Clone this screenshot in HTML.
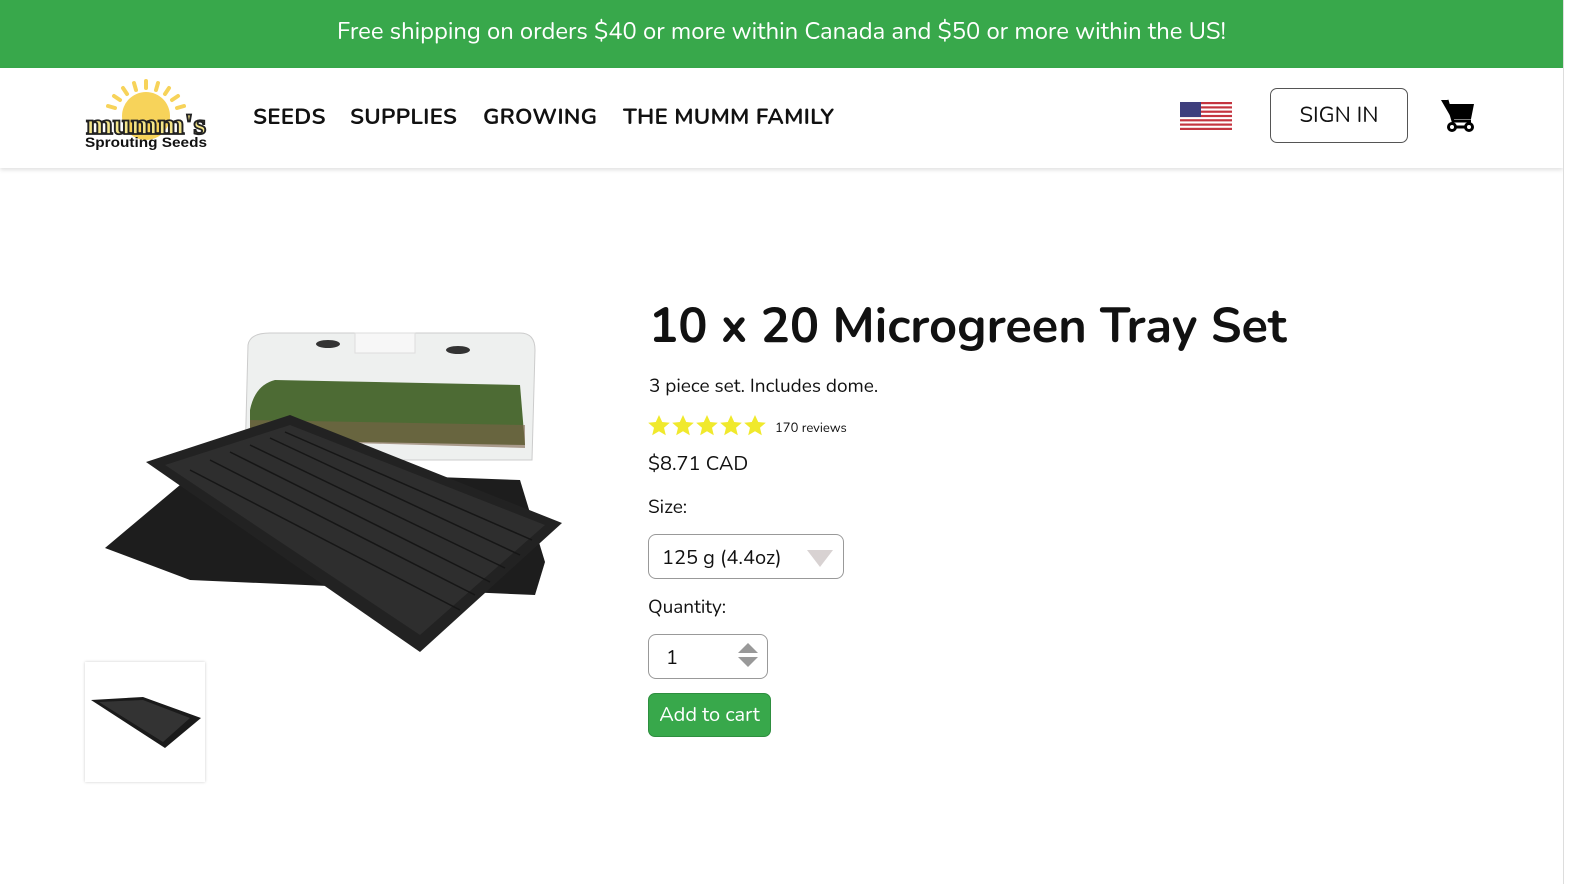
<!DOCTYPE html>
<html><head><meta charset="utf-8"><style>
*{margin:0;padding:0;box-sizing:border-box}
body{width:1572px;height:884px;background:#fff;font-family:"Nunito","Liberation Sans",sans-serif;color:#111;position:relative;overflow:hidden}
.banner{position:absolute;left:0;top:0;width:1563px;height:68px;background:#38a84b;color:#fff;font-size:23.8px;text-align:center;line-height:64px}
.rline{position:absolute;left:1563px;top:0;width:9px;height:884px;background:#fff;border-left:1px solid #ddd}
.header{position:absolute;left:0;top:68px;width:1563px;height:100px;background:#fff;box-shadow:0 2px 4px rgba(0,0,0,.12)}
.nav{position:absolute;top:101px;font-size:22.3px;font-weight:bold;color:#111;letter-spacing:.2px}
.signin{position:absolute;left:1270px;top:88px;width:138px;height:55px;border:1.5px solid #555;border-radius:7px;font-size:22px;text-align:center;line-height:52px}
.abs{position:absolute}
h1{position:absolute;left:649px;top:294px;font-size:48.8px;font-weight:bold;white-space:nowrap}
.t{position:absolute;font-size:19px;white-space:nowrap}
.box{position:absolute;border:1px solid #999;border-radius:8px;background:#fff}
.btn{position:absolute;left:648px;top:693px;width:123px;height:44px;background:#38a84b;border-radius:7px;color:#fff;font-size:20px;text-align:center;line-height:44px;border:1px solid #2e8e3f}
.thumb{position:absolute;left:85px;top:662px;width:120px;height:120px;box-shadow:0 0 3px rgba(0,0,0,.2)}
</style></head><body>
<div class="banner">Free shipping on orders $40 or more within Canada and $50 or more within the US!</div>
<div class="header"></div>
<div class="rline"></div>
<svg class="abs" style="left:80px;top:76px" width="132" height="78" viewBox="0 0 132 78">
<g fill="#f7d35a"><circle cx="66" cy="40" r="24"/>
<g stroke="#f7d35a" stroke-width="4" stroke-linecap="round">
<line x1="66" y1="5" x2="66" y2="12"/><line x1="54" y1="7" x2="56" y2="14"/><line x1="78" y1="7" x2="76" y2="14"/><line x1="43" y1="12" x2="47" y2="18"/><line x1="89" y1="12" x2="85" y2="18"/><line x1="34" y1="20" x2="40" y2="24"/><line x1="98" y1="20" x2="92" y2="24"/><line x1="28" y1="30" x2="35" y2="32"/><line x1="104" y1="30" x2="97" y2="32"/></g></g>
<text x="66" y="58" text-anchor="middle" font-family="Liberation Serif" font-weight="bold" font-size="30" textLength="120" lengthAdjust="spacingAndGlyphs" fill="#f3e58a" stroke="#222" stroke-width="1.8">mumm's</text>
<text x="66" y="71" text-anchor="middle" font-family="Liberation Sans" font-weight="bold" font-size="14" textLength="122" lengthAdjust="spacingAndGlyphs" fill="#111">Sprouting Seeds</text>
</svg>
<div class="nav" style="left:253px">SEEDS</div>
<div class="nav" style="left:350px">SUPPLIES</div>
<div class="nav" style="left:483px">GROWING</div>
<div class="nav" style="left:623px">THE MUMM FAMILY</div>
<svg class="abs" style="left:1180px;top:102px" width="52" height="28" viewBox="0 0 52 28">
<rect width="52" height="28" fill="#fff"/>
<g fill="#c4343f"><rect y="0" width="52" height="2.2"/><rect y="4.3" width="52" height="2.2"/><rect y="8.6" width="52" height="2.2"/><rect y="12.9" width="52" height="2.2"/><rect y="17.2" width="52" height="2.2"/><rect y="21.5" width="52" height="2.2"/><rect y="25.8" width="52" height="2.2"/></g>
<rect width="21" height="15" fill="#3f3f7d"/></svg>
<div class="signin">SIGN IN</div>
<svg class="abs" style="left:1440px;top:97px" width="36" height="36" viewBox="0 0 36 36">
<path d="M1 3h6l2 4h25l-3 15H12z" fill="#000"/><path d="M7 3l6 21h18" stroke="#000" stroke-width="3" fill="none"/>
<circle cx="12" cy="30" r="3.5" fill="#fff" stroke="#000" stroke-width="3"/><circle cx="29" cy="30" r="3.5" fill="#fff" stroke="#000" stroke-width="3"/><line x1="14" y1="30" x2="27" y2="30" stroke="#000" stroke-width="3"/></svg>

<svg class="abs" style="left:0;top:0" width="620" height="700" viewBox="0 0 620 700">
<path d="M248 345 Q250 333 270 333 H520 Q535 333 535 350 L532 460 H245 Z" fill="#eef0ef" stroke="#ccc"/>
<rect x="355" y="333" width="60" height="20" fill="#f7f7f7" stroke="#ddd"/>
<ellipse cx="328" cy="344" rx="12" ry="4" fill="#333"/><ellipse cx="458" cy="350" rx="12" ry="4" fill="#333"/>
<path d="M250 410 Q255 385 275 380 L520 385 L525 445 L250 440 Z" fill="#4d6b34"/>
<path d="M250 420 L525 425 L525 448 L250 440Z" fill="#7b6048" opacity=".6"/>
<path d="M105 548 L180 485 L240 470 L520 480 L545 562 L535 595 L190 580 Z" fill="#1d1d1d"/>
<path d="M146 462 L290 415 L562 523 L420 652 Z" fill="#222"/>
<path d="M165 465 L290 425 L545 525 L420 635 Z" fill="#2e2e2e"/>
<g stroke="#161616" stroke-width="1.5">
<line x1="190" y1="470" x2="460" y2="610"/><line x1="210" y1="460" x2="475" y2="595"/><line x1="230" y1="452" x2="490" y2="582"/><line x1="250" y1="445" x2="505" y2="568"/><line x1="270" y1="438" x2="520" y2="555"/><line x1="285" y1="432" x2="532" y2="540"/></g>
</svg>
<div class="thumb"><svg width="120" height="120" viewBox="0 0 120 120"><path d="M6 38 L58 35 L116 56 L80 86 Z" fill="#1a1a1a"/><path d="M14 40 L58 38 L105 56 L78 80Z" fill="#333"/></svg></div>

<h1>10 x 20 Microgreen Tray Set</h1>
<div class="t" style="left:649px;top:373px">3 piece set. Includes dome.</div>
<svg class="abs" style="left:648px;top:415px" width="118" height="22" viewBox="0 0 118 22">
<g fill="#f0e92c"><path id="s" d="M11 0l3.2 7 7.6.7-5.8 5 1.8 7.5L11 16.3 4.2 20.2 6 12.7 0.2 7.7 7.8 7z"/><use href="#s" x="24"/><use href="#s" x="48"/><use href="#s" x="72"/><use href="#s" x="96"/></g></svg>
<div class="t" style="left:775px;top:419px;font-size:13px">170 reviews</div>
<div class="t" style="left:648px;top:451px;font-size:20px">$8.71 CAD</div>
<div class="t" style="left:648px;top:494px">Size:</div>
<div class="box" style="left:648px;top:534px;width:196px;height:45px"><span class="t" style="left:13px;top:10px;font-size:20px">125 g (4.4oz)</span>
<svg class="abs" style="left:158px;top:15px" width="26" height="17"><path d="M0 0h26L13 17z" fill="#d8d2d2"/></svg></div>
<div class="t" style="left:648px;top:594px">Quantity:</div>
<div class="box" style="left:648px;top:634px;width:120px;height:45px"><span class="t" style="left:17px;top:10px;font-size:20px">1</span>
<svg class="abs" style="left:89px;top:8px" width="20" height="26"><path d="M10 0L20 10H0z M0 14h20L10 24z" fill="#999"/></svg></div>
<div class="btn">Add to cart</div>
</body></html>
